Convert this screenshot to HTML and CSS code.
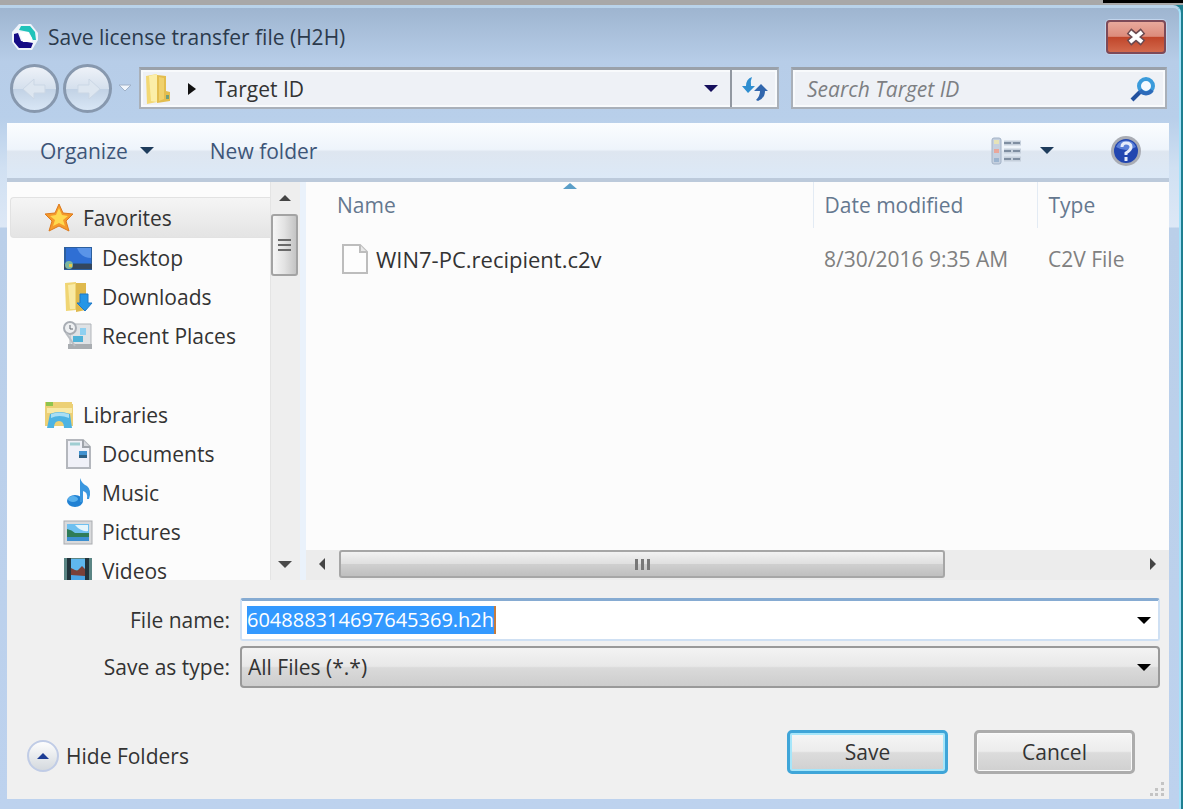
FILE: index.html
```
<!DOCTYPE html>
<html lang="en">
<head>
    <meta charset="utf-8">
    <title>Save license transfer file (H2H)</title>
    <link rel="stylesheet" href="styles.css">
</head>
<body>
    <div class="desktop-strip"><div class="desktop-dark"></div></div>
    <div class="dialog">
        <header class="titlebar">
            <svg class="app-icon" viewBox="0 0 28 28">
                <path d="M8 1 H20 L27 10 V17 L21 27 H7 L1 19 V9 Z" fill="#eef4fb"/>
                <path d="M8 7 L10 3 H19 L24 9 L25 17 L22 17 L18 9 Z" fill="#1fc3ba"/>
                <path d="M3 11 L7 10 L10 18 L22 20 L20 25 H8 L3 19 Z" fill="#150c86"/>
                <path d="M8 9 H17 L21 15 V19 H12 Z" fill="#fff"/>
            </svg>
            <h1 class="title">Save license transfer file (H2H)</h1>
            <button class="close" type="button" aria-label="Close">
                <svg width="24" height="18" viewBox="0 0 24 18">
                    <path d="M5 3 L19 15 M19 3 L5 15" stroke="#6b4a50" stroke-width="7"/>
                    <path d="M6 4 L18 14 M18 4 L6 14" stroke="#fff" stroke-width="4"/>
                </svg>
            </button>
        </header>

        <nav class="navbar">
            <div class="history">
                <button class="round" type="button" aria-label="Back">
                    <svg width="32" height="30" viewBox="0 0 32 30"><path d="M4 16 L15 6 V12 H26 V20 H15 V26 Z" fill="#dde6f0" stroke="#cbd7e5"/></svg>
                </button>
                <button class="round" type="button" aria-label="Forward">
                    <svg width="32" height="30" viewBox="0 0 32 30"><path d="M28 16 L17 6 V12 H6 V20 H17 V26 Z" fill="#dde6f0" stroke="#cbd7e5"/></svg>
                </button>
                <button class="recent" type="button" aria-label="Recent locations">
                    <svg width="16" height="12" viewBox="0 0 16 12"><path d="M2 3 H14 L8 9 Z" fill="#f0f5fb" stroke="#9fb1c8"/></svg>
                </button>
            </div>
            <div class="address">
                <svg width="26" height="30" viewBox="0 0 26 30">
                    <path d="M1 2 L12 0 V28 L2 30 Z" fill="#f3d873"/>
                    <path d="M4 2 L12 0 V28 L6 27 Z" fill="#fbeea8"/>
                    <path d="M12 1 L21 2 V17 L25 18 V27 L12 29 Z" fill="#e3bd4e"/>
                    <path d="M14 3 L19 4 V25 L14 27 Z" fill="#f0d16c"/>
                    <path d="M21 21 H24 V25 H21 Z" fill="#6f9f7c"/>
                </svg>
                <svg class="crumb-arrow" width="10" height="14" viewBox="0 0 10 14"><path d="M0 1 L8 7 L0 13 Z" fill="#111"/></svg>
                <span class="crumb">Target ID</span>
                <button class="plain" type="button" aria-label="Previous locations">
                    <span class="caret navy"></span>
                </button>
                <button class="refresh" type="button" aria-label="Refresh">
                    <svg width="28" height="26" viewBox="0 0 28 26">
                        <path d="M11 1 Q5 3 5 10 H1 L7 17 L14 10 H10 Q9 5 11 1 Z" fill="#2f8ed0"/>
                        <path d="M20 8 L27 15 H24 Q24 22 17 25 L15 24 Q19 20 19 15 H13 Z" fill="#3166ad"/>
                    </svg>
                </button>
            </div>
            <div class="search">
                <input type="text" aria-label="Search" placeholder="Search Target ID">
                <svg width="26" height="26" viewBox="0 0 26 26">
                    <path d="M2 24 L10 16" stroke="#23519e" stroke-width="4"/>
                    <circle cx="16" cy="10" r="7" fill="#f4faff" stroke="#3a9bdb" stroke-width="4"/>
                    <path d="M10 14 A7 7 0 0 0 22 14" fill="none" stroke="#2d6bba" stroke-width="4"/>
                </svg>
            </div>
        </nav>

        <main class="content">
            <div class="toolbar">
                <button class="tool" type="button">Organize <span class="caret"></span></button>
                <button class="tool" type="button">New folder</button>
                <button class="tool view" type="button" aria-label="Change your view">
                    <svg width="31" height="28" viewBox="0 0 31 28">
                        <rect x="1" y="1" width="9" height="26" rx="2" fill="#c5d0df" stroke="#a3b2c6"/>
                        <path d="M3 5 H8" stroke="#e6e3b8" stroke-width="4"/>
                        <path d="M3 14 H8" stroke="#e9a79b" stroke-width="4"/>
                        <path d="M3 23 H8" stroke="#9cb4cf" stroke-width="4"/>
                        <path d="M13 6 H30 M13 14 H30 M13 22 H30" stroke="#c6d0dc" stroke-width="5"/>
                        <path d="M13 6 H20 M22 6 H29 M13 14 H20 M22 14 H29 M13 22 H20 M22 22 H29" stroke="#7f8ea1" stroke-width="2"/>
                    </svg>
                    <span class="caret"></span>
                </button>
                <button class="tool help" type="button" aria-label="Help">
                    <svg width="32" height="32" viewBox="0 0 32 32">
                        <circle cx="16" cy="16" r="15" fill="#a9acb4"/>
                        <circle cx="16" cy="16" r="12" fill="#2246b0"/>
                        <path d="M6 12 A11 11 0 0 1 26 12 Q16 18 6 12 Z" fill="#5b80d8"/>
                        <path d="M12 12 Q12 8 16 8 Q21 8 21 12 Q21 15 16 18 V20 M16 22 V26" fill="none" stroke="#e6ecfa" stroke-width="3"/>
                    </svg>
                </button>
            </div>

            <div class="panes">
                <aside class="tree">
                    <ul class="tree-list">
                        <li class="node root selected">
                            <svg viewBox="0 0 30 30">
                                <path d="M15 1 L19 10 L29 11 L22 18 L25 28 L15 23 L5 28 L8 18 L1 11 L11 10 Z" fill="#f59a2c" stroke="#dd7a1d"/>
                                <path d="M15 5 L18 12 L24 13 L19 17 L21 23 L15 20 L9 23 L11 17 L6 13 L12 12 Z" fill="#ffd94f"/>
                            </svg>
                            Favorites
                        </li>
                        <li class="node">
                            <svg viewBox="0 0 30 30">
                                <rect x="1" y="4" width="28" height="23" fill="#2c5f9e"/>
                                <path d="M3 5 H28 V20 H3 Z" fill="#2f6fd4"/>
                                <path d="M14 5 H28 V15 Q18 15 14 5 Z" fill="#5a94e8"/>
                                <rect x="1" y="21" width="28" height="5" fill="#34475e"/>
                                <circle cx="6" cy="22" r="4" fill="#7cb6a0"/>
                                <path d="M6 21 H9 V24 H6 Z" fill="#e5c84b"/>
                            </svg>
                            Desktop
                        </li>
                        <li class="node">
                            <svg viewBox="0 0 30 30">
                                <path d="M2 1 L13 0 V28 L3 29 Z" fill="#f0d573"/>
                                <path d="M5 3 L12 2 V27 L7 27 Z" fill="#f9eaa4"/>
                                <path d="M13 1 H23 V28 L13 30 Z" fill="#dfb94d"/>
                                <path d="M17 12 H25 V21 H29 L22 29 L14 21 H17 Z" fill="#2696e6" stroke="#1c78c8"/>
                            </svg>
                            Downloads
                        </li>
                        <li class="node">
                            <svg viewBox="0 0 30 30">
                                <path d="M7 3 H28 V25 H7 Z" fill="#dfe2e5" stroke="#b1b5b9"/>
                                <path d="M5 23 H29 V28 H5 Z" fill="#a9adb1"/>
                                <path d="M17 7 H23 V14 H17 Z" fill="#8fd0f0"/>
                                <path d="M10 15 H20 V21 H10 Z" fill="#4fb2d8"/>
                                <circle cx="7" cy="7" r="6" fill="#eef0f2" stroke="#a8adb4" stroke-width="2"/>
                                <path d="M7 4 V8 H10" fill="none" stroke="#60666f"/>
                                <path d="M3 12 L12 25" stroke="#b9bdc2" stroke-width="2"/>
                            </svg>
                            Recent Places
                        </li>
                    </ul>
                    <ul class="tree-list">
                        <li class="node root">
                            <svg viewBox="0 0 30 30">
                                <path d="M1 2 H28 V4 H29 V26 H1 Z" fill="#ecd075"/>
                                <path d="M3 8 H28 V13 H3 Z" fill="#f8e9a6"/>
                                <path d="M2 2 H9 V6 H2 Z" fill="#8fc44d"/>
                                <path d="M6 14 Q15 10 26 14 L28 28 H20 Q20 21 15 21 Q10 21 10 28 H3 Z" fill="#4db3e2"/>
                                <path d="M7 14 Q15 11 25 14 V18 Q15 14 7 18 Z" fill="#a8def4"/>
                            </svg>
                            Libraries
                        </li>
                        <li class="node">
                            <svg viewBox="0 0 30 30">
                                <path d="M4 1 H20 L27 8 V29 H4 Z" fill="#f0f1f8" stroke="#b4b7bd" stroke-width="2"/>
                                <path d="M20 1 V8 H27" fill="#d8dadf" stroke="#a0a4ab" stroke-width="2"/>
                                <path d="M7 5 H17" stroke="#9fcdd2" stroke-width="3"/>
                                <path d="M16 12 H24 V19 H16 Z" fill="#4292cf"/>
                                <path d="M16 16 H24 V19 H16 Z" fill="#2e6083"/>
                            </svg>
                            Documents
                        </li>
                        <li class="node">
                            <svg viewBox="0 0 30 30">
                                <ellipse cx="12" cy="23" rx="8" ry="6" fill="#2181d3"/>
                                <ellipse cx="10" cy="21" rx="5" ry="3" fill="#58b0ec"/>
                                <path d="M17 24 V0 Q19 6 24 8 Q29 12 26 21 H24 Q25 14 20 13 V24 Z" fill="#3a97df"/>
                            </svg>
                            Music
                        </li>
                        <li class="node">
                            <svg viewBox="0 0 30 30">
                                <rect x="1" y="4" width="28" height="23" fill="#d9dadc" stroke="#a9acb0"/>
                                <rect x="4" y="7" width="22" height="17" fill="#6ec0f0"/>
                                <path d="M12 8 H25 V14 Q18 15 12 8 Z" fill="#e4f5fc"/>
                                <path d="M4 12 Q9 13 12 16 H26 V20 H4 Z" fill="#2f7c58"/>
                                <path d="M4 20 H26 V24 H4 Z" fill="#3c8fd0"/>
                            </svg>
                            Pictures
                        </li>
                        <li class="node">
                            <svg viewBox="0 0 30 30">
                                <rect x="1" y="2" width="28" height="28" fill="#5b8584"/>
                                <path d="M4 2 H8 V30 H4 Z M22 2 H26 V30 H22 Z" fill="#22343c"/>
                                <path d="M8 3 H22 V14 H8 Z" fill="#5fb7ee"/>
                                <path d="M8 17 H22 V30 H8 Z" fill="#4aa5e6"/>
                                <path d="M8 12 L14 15 L19 10 L22 13 V20 L8 19 Z" fill="#7a4038"/>
                            </svg>
                            Videos
                        </li>
                    </ul>
                </aside>
                <div class="vscroll">
                    <button class="plain" type="button" aria-label="Scroll up"><span class="up"></span></button>
                    <div class="vthumb"><i></i><i></i><i></i></div>
                    <button class="plain down" type="button" aria-label="Scroll down"><span class="caret grey"></span></button>
                </div>
                <section class="files">
                    <span class="sort"></span>
                    <table class="file-table">
                        <thead>
                            <tr><th class="col-name">Name</th><th class="col-date">Date modified</th><th>Type</th></tr>
                        </thead>
                        <tbody>
                            <tr>
                                <td class="file-name">
                                    <svg width="28" height="32" viewBox="0 0 28 32">
                                        <path d="M2 2 H19 L26 9 V30 H2 Z" fill="#fdfdfd" stroke="#bdbdbd" stroke-width="2"/>
                                        <path d="M19 2 V9 H26" fill="#e8e8e8" stroke="#bdbdbd" stroke-width="2"/>
                                    </svg>
                                    WIN7-PC.recipient.c2v
                                </td>
                                <td>8/30/2016 9:35 AM</td>
                                <td>C2V File</td>
                            </tr>
                        </tbody>
                    </table>
                    <div class="hscroll">
                        <button class="plain" type="button" aria-label="Scroll left"><span class="left"></span></button>
                        <div class="htrack"><div class="hthumb"><i></i><i></i><i></i></div></div>
                        <button class="plain" type="button" aria-label="Scroll right"><span class="right"></span></button>
                    </div>
                </section>
            </div>

            <form class="footer">
                <div class="fields">
                    <label for="file_name">File name:</label>
                    <div class="combo">
                        <input type="text" id="file_name" name="file_name" value="604888314697645369.h2h" spellcheck="false" autocomplete="off">
                        <button class="plain" type="button" aria-label="Previous file names"><span class="caret black"></span></button>
                    </div>
                    <label for="file_type">Save as type:</label>
                    <div class="type-select">
                        <select id="file_type" name="file_type">
                            <option>All Files (*.*)</option>
                        </select>
                        <span class="caret black"></span>
                    </div>
                </div>
                <div class="actions">
                    <button class="hide-folders" type="button">
                        <span class="disc"><span class="up blue"></span></span>
                        Hide Folders
                    </button>
                    <button class="button default" type="submit">Save</button>
                    <button class="button" type="button">Cancel</button>
                </div>
                <svg class="grip" width="16" height="16" viewBox="0 0 16 16">
                    <path d="M12 1 h3 v3 h-3 Z M12 7 h3 v3 h-3 Z M12 12 h3 v3 h-3 Z M6 7 h3 v3 h-3 Z M6 12 h3 v3 h-3 Z M1 12 h3 v3 h-3 Z" fill="#c4c4c4"/>
                </svg>
            </form>
        </main>
    </div>

    <script>
        document.addEventListener('DOMContentLoaded', function() {
            const nameInput = document.getElementById('file_name');
            nameInput.focus();
            nameInput.select();
        });
    </script>
</body>
</html>
```

FILE: styles.css
```
* {
    box-sizing: border-box;
}

body {
    margin: 0;
    min-height: 100vh;
    display: flex;
    flex-direction: column;
    font-family: "Open Sans", "Noto Sans", sans-serif;
    font-size: 21px;
    line-height: 28px;
    color: #333;
    background-color: #1f7f90;
}
button, input, select {
    font: inherit;
    color: inherit;
    margin: 0;
    padding: 0;
    border: 0;
    background: none;
}
input:focus {
    outline: none;
}
svg {
    flex: none;
    display: block;
}
ul {
    list-style: none;
    margin: 0;
    padding: 0;
}

.desktop-strip {
    height: 5px;
    background-color: #a8a8a8;
    display: flex;
    justify-content: flex-end;
}
.desktop-dark {
    width: 80px;
    height: 3px;
    background-color: #000;
}

/* window frame */
.dialog {
    flex: 1;
    display: flex;
    flex-direction: column;
    margin-right: 2px;
    padding: 0 10px 11px 7px;
    border-top: 3px solid #b9d3ea;
    border-right: 2px solid #a5e2fa;
    border-top-right-radius: 8px;
    background: linear-gradient(#9eb5d0 0, #b7cde8 54px, #b8cfea 110px, #d0e0f2 160px, #dde8f6 219px, #bacfe9 220px, #bdd2ee 100%);
}
.titlebar {
    display: flex;
    align-items: center;
    height: 59px;
    padding: 0 3px 2px 4px;
}
.app-icon {
    width: 28px;
    height: 28px;
}
.title {
    flex: 1;
    margin: 0 0 0 9px;
    font-size: 21px;
    font-weight: normal;
    color: #2c3a4c;
}
.close {
    display: flex;
    align-items: center;
    justify-content: center;
    width: 60px;
    height: 34px;
    border: 2px solid #7d4a58;
    border-radius: 4px;
    background: linear-gradient(#e8a99c, #dc8b7b 48%, #c0452a 50%, #d2694c);
    box-shadow: 0 0 0 1px #c3d5ec;
}

/* address row */
.navbar {
    display: flex;
    align-items: center;
    height: 42px;
    margin-bottom: 14px;
    padding-right: 2px;
}
.history {
    display: flex;
    align-items: center;
    gap: 4px;
    width: 132px;
    padding-left: 3px;
}
.round {
    display: flex;
    align-items: center;
    justify-content: center;
    width: 49px;
    height: 49px;
    border: 3px solid #8798ae;
    border-radius: 50%;
    background: linear-gradient(#eef2f8, #d5e0ed 50%, #c2d2e5 52%, #d8e6f5);
}
.recent {
    margin-left: 1px;
}
.address, .search {
    display: flex;
    align-items: center;
    height: 42px;
    border: 2px solid #a9b0b9;
    border-top: 3px solid #9aa1aa;
    background-color: #eef1f6;
    box-shadow: inset 0 0 0 2px #f8fafc;
}
.address {
    flex: 1;
    padding-left: 4px;
}
.crumb-arrow {
    margin: 0 17px;
}
.crumb {
    flex: 1;
}
.address .plain {
    width: 38px;
}
.refresh {
    display: flex;
    align-items: center;
    justify-content: center;
    width: 47px;
    height: 100%;
    border-left: 2px solid #9298a1;
}
.search {
    width: 376px;
    margin-left: 12px;
    padding: 0 9px 0 14px;
}
.search input {
    flex: 1;
    min-width: 0;
}
.search input::placeholder {
    font-style: italic;
    color: #7d7f83;
    opacity: 1;
}

.plain {
    display: flex;
    align-items: center;
    justify-content: center;
}
.caret {
    display: inline-block;
    border: 7px solid transparent;
    border-top-color: #1e3c5c;
    border-bottom: 0;
}
.caret.navy {
    border-top-color: #150f5c;
}
.caret.black {
    border-top-color: #000;
}
.caret.grey {
    border-top-color: #4a4a4a;
}
.up {
    border: 6px solid transparent;
    border-bottom-color: #444;
    border-top: 0;
}
.up.blue {
    border-bottom-color: #1c3c94;
}
.left {
    border: 6px solid transparent;
    border-right-color: #444;
    border-left: 0;
}
.right {
    border: 6px solid transparent;
    border-left-color: #444;
    border-right: 0;
}

.content {
    flex: 1;
    display: flex;
    flex-direction: column;
    background-color: #f0f0f0;
}
.toolbar {
    display: flex;
    align-items: center;
    height: 59px;
    padding: 0 27px 0 33px;
    border-bottom: 4px solid #bccadb;
    background: linear-gradient(#fbfdff, #eef4fb 48%, #dee6f0 52%, #dce9f7);
}
.tool {
    display: flex;
    align-items: center;
    margin-right: 56px;
    color: #3d5578;
}
.tool .caret {
    margin-left: 12px;
}
.tool.view {
    margin-left: auto;
}
.tool.view .caret {
    margin-left: 18px;
}
.tool.help {
    margin-right: 0;
}

/* tree and file list */
.panes {
    flex: 1;
    display: flex;
    min-height: 398px;
}
.tree {
    flex: none;
    width: 263px;
    height: 398px;
    padding-top: 15px;
    overflow: hidden;
    background-color: #fcfcfc;
}
.tree-list + .tree-list {
    margin-top: 40px;
}
.node {
    display: flex;
    align-items: center;
    gap: 9px;
    height: 39px;
    padding-left: 56px;
    line-height: 16px;
}
.node svg {
    width: 30px;
    height: 30px;
}
.node.root {
    padding-left: 37px;
}
.node.selected {
    height: 41px;
    margin-left: 3px;
    padding-left: 33px;
    border: 1px solid #e2e2e2;
    border-right: 0;
    border-radius: 4px 0 0 4px;
    background: linear-gradient(#f5f5f5, #e4e4e4);
}
.vscroll {
    display: flex;
    flex-direction: column;
    width: 30px;
    padding-right: 2px;
    background-color: #eeeeee;
    border-left: 1px solid #e4e4e4;
}
.vscroll .plain {
    height: 32px;
}
.vscroll .down {
    margin-top: auto;
}
.vthumb {
    display: flex;
    flex-direction: column;
    align-items: center;
    justify-content: center;
    gap: 3px;
    height: 62px;
    width: 27px;
    border: 2px solid #a3a3a3;
    border-radius: 3px;
    background: linear-gradient(to right, #f6f6f6, #e2e2e2 50%, #c4c4c4);
}
.vthumb i {
    width: 13px;
    height: 2px;
    background-color: #6a6a6a;
}
.files {
    position: relative;
    flex: 1;
    display: flex;
    flex-direction: column;
    border-left: 6px solid #eaf2fb;
    background-color: #fcfcfc;
}
.sort {
    position: absolute;
    top: 1px;
    left: 257px;
    border: 7px solid transparent;
    border-bottom: 6px solid #5b9fc8;
    border-top: 0;
}
.file-table {
    width: 100%;
    table-layout: fixed;
    border-collapse: collapse;
    color: #808080;
}
.file-table th {
    height: 46px;
    padding: 0 0 0 11px;
    font-weight: normal;
    text-align: left;
    color: #65788f;
    border-right: 1px solid #e3ebf4;
}
.file-table th:last-child {
    border-right: 0;
}
.file-table .col-name {
    width: 507px;
    padding-left: 31px;
}
.file-table .col-date {
    width: 224px;
}
.file-table td {
    height: 62px;
    padding: 0 0 0 11px;
    white-space: nowrap;
}
.file-table .file-name {
    display: flex;
    align-items: center;
    gap: 7px;
    padding-left: 35px;
    font-size: 22px;
    color: #333;
}
.hscroll {
    display: flex;
    height: 30px;
    margin-top: auto;
    padding-bottom: 2px;
    background-color: #ececec;
}
.hscroll .plain {
    width: 32px;
}
.htrack {
    flex: 1;
    padding-left: 1px;
}
.hthumb {
    display: flex;
    align-items: center;
    justify-content: center;
    gap: 3px;
    width: 76%;
    height: 28px;
    border: 2px solid #a6a6a6;
    border-radius: 3px;
    background: linear-gradient(#f2f2f2, #e0e0e0 48%, #cfcfcf 52%, #bfbfbf);
}
.hthumb i {
    width: 3px;
    height: 11px;
    background-color: #777;
}

/* bottom area */
.footer {
    position: relative;
    padding: 18px 0 25px;
}
.fields {
    display: grid;
    grid-template-columns: 223px 1fr;
    grid-template-rows: 43px 42px;
    gap: 5px 10px;
    align-items: center;
    padding-right: 9px;
}
.fields label {
    text-align: right;
}
.combo, .type-select {
    display: flex;
    align-items: center;
    height: 100%;
}
.combo {
    justify-content: space-between;
    padding: 0 7px 0 5px;
    border: 2px solid #cfe0f3;
    border-top: 3px solid #86abd2;
    border-radius: 3px;
    background-color: #fff;
}
.combo input {
    field-sizing: content;
    font-size: 20px;
    line-height: 28px;
    height: 28px;
    border-right: 2px solid #c77b3c;
}
.combo input::selection {
    color: #fff;
    background-color: #3399ff;
}
.type-select {
    position: relative;
}
.type-select select {
    appearance: none;
    width: 100%;
    height: 100%;
    padding: 0 32px 0 6px;
    border: 2px solid #999;
    border-radius: 4px;
    background: linear-gradient(#f3f3f3, #e8e8e8 48%, #dadada 52%, #cdcdcd);
}
.type-select .caret {
    position: absolute;
    right: 9px;
    pointer-events: none;
}
.actions {
    display: flex;
    align-items: center;
    gap: 26px;
    margin-top: 42px;
    padding: 0 34px 0 20px;
}
.hide-folders {
    display: flex;
    align-items: center;
    gap: 7px;
    margin-right: auto;
    padding-top: 8px;
}
.disc {
    display: flex;
    align-items: center;
    justify-content: center;
    width: 32px;
    height: 32px;
    border: 2px solid #c0cce6;
    border-radius: 50%;
    background: linear-gradient(#fdfdfd, #d4d9de);
}
.button {
    width: 161px;
    height: 44px;
    border: 3px solid #acacac;
    border-radius: 5px;
    background: linear-gradient(#f6f6f6, #ececec 48%, #dcdcdc 52%, #d0d0d0);
    box-shadow: inset 0 0 0 1px #fafafa;
}
.button.default {
    border-color: #3fa5d8;
    box-shadow: inset 0 0 0 2px #a6e6fa;
}
.grip {
    position: absolute;
    right: 4px;
    bottom: 2px;
}
```
